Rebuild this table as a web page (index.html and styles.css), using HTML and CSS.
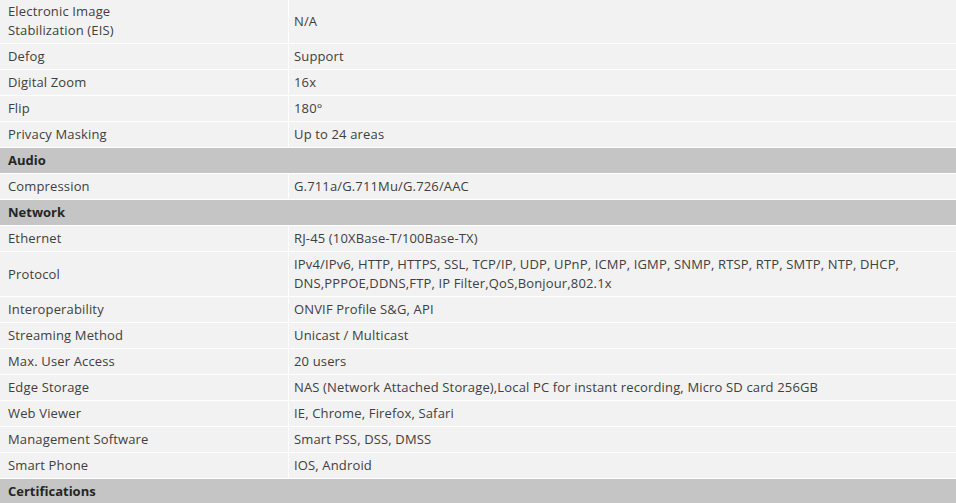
FILE: index.html
```html
<!DOCTYPE html>
<html>
<head>
<meta charset="utf-8">
<link rel="stylesheet" href="styles.css">
</head>
<body>
<table class="spec">
  <tr><td class="k">Electronic Image<br>Stabilization (EIS)</td><td class="v">N/A</td></tr>
  <tr><td class="k">Defog</td><td class="v">Support</td></tr>
  <tr><td class="k">Digital Zoom</td><td class="v">16x</td></tr>
  <tr><td class="k">Flip</td><td class="v">180°</td></tr>
  <tr><td class="k">Privacy Masking</td><td class="v">Up to 24 areas</td></tr>
  <tr><td class="sec" colspan="2">Audio</td></tr>
  <tr><td class="k">Compression</td><td class="v">G.711a/G.711Mu/G.726/AAC</td></tr>
  <tr><td class="sec" colspan="2">Network</td></tr>
  <tr><td class="k">Ethernet</td><td class="v">RJ-45 (10XBase-T/100Base-TX)</td></tr>
  <tr><td class="k">Protocol</td><td class="v">IPv4/IPv6, HTTP, HTTPS, SSL, TCP/IP, UDP, UPnP, ICMP, IGMP, SNMP, RTSP, RTP, SMTP, NTP, DHCP,<br>DNS,PPPOE,DDNS,FTP, IP Filter,QoS,Bonjour,802.1x</td></tr>
  <tr><td class="k">Interoperability</td><td class="v">ONVIF Profile S&amp;G, API</td></tr>
  <tr><td class="k">Streaming Method</td><td class="v">Unicast / Multicast</td></tr>
  <tr><td class="k">Max. User Access</td><td class="v">20 users</td></tr>
  <tr><td class="k">Edge Storage</td><td class="v">NAS (Network Attached Storage),Local PC for instant recording, Micro SD card 256GB</td></tr>
  <tr><td class="k">Web Viewer</td><td class="v">IE, Chrome, Firefox, Safari</td></tr>
  <tr><td class="k">Management Software</td><td class="v">Smart PSS, DSS, DMSS</td></tr>
  <tr><td class="k">Smart Phone</td><td class="v">IOS, Android</td></tr>
  <tr><td class="sec" colspan="2">Certifications</td></tr>
</table>
</body>
</html>
```
FILE: styles.css
```css
html, body {
  margin: 0;
  padding: 0;
  background: #ffffff;
}
body {
  font-family: "Open Sans", "Noto Sans", sans-serif;
  font-size: 13px;
  letter-spacing: 0.15px;
  color: #404040;
  overflow: hidden;
}
.spec {
  width: 100%;
  margin-top: -1px;
  border-collapse: separate;
  border-spacing: 0;
  table-layout: fixed;
}
.spec td {
  background: #f2f2f2;
  line-height: 19px;
  padding: 3px 5px;
  border-bottom: 1px solid #ffffff;
  vertical-align: middle;
  white-space: nowrap;
}
.spec td.k {
  width: 275px;
  padding-left: 8px;
}
.spec td.v {
  border-left: 1px solid #ffffff;
}
.spec td.sec {
  background: #c4c5c4;
  font-weight: bold;
  letter-spacing: 0;
  color: #262626;
  padding-left: 8px;
}
```
